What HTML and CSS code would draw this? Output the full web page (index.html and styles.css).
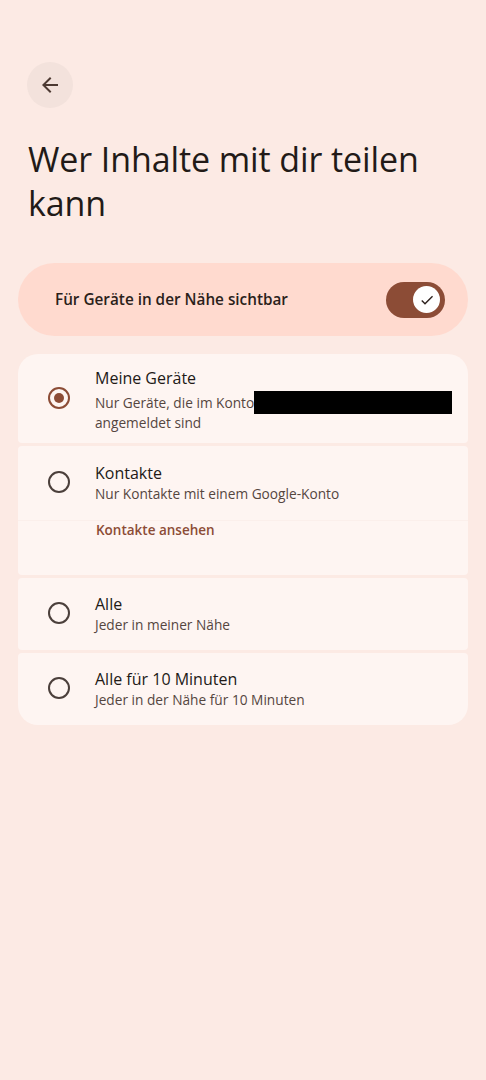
FILE: index.html
```html
<html>
<head>
<title>Sichtbarkeit</title>
<link rel="stylesheet" href="styles.css">
</head>
<body>
<div class="page">
  <div class="back">
    <svg width="24" height="24" viewBox="0 0 24 24"><path d="M20 11H7.83l5.59-5.59L12 4l-8 8 8 8 1.41-1.41L7.83 13H20v-2z" fill="#4d3a33"/></svg>
  </div>
  <h1 class="title">Wer Inhalte mit dir teilen kann</h1>

  <div class="vis">
    <span class="vis-label">Für Geräte in der Nähe sichtbar</span>
    <div class="switch">
      <div class="thumb">
        <svg width="16" height="16" viewBox="0 0 24 24"><path d="M9 16.17L4.83 12l-1.42 1.41L9 19 21 7l-1.41-1.41z" fill="#2b1f1b"/></svg>
      </div>
    </div>
  </div>

  <div class="list">
    <div class="item first">
      <div class="radio on"><span></span></div>
      <div class="text">
        <div class="name">Meine Geräte</div>
        <div class="sub">Nur Geräte, die im Konto<span class="redact"></span><br>angemeldet sind</div>
      </div>
    </div>
    <div class="item joined">
      <div class="radio"></div>
      <div class="text">
        <div class="name">Kontakte</div>
        <div class="sub">Nur Kontakte mit einem Google-Konto</div>
      </div>
    </div>
    <div class="item link">
      <a class="show">Kontakte ansehen</a>
    </div>
    <div class="item">
      <div class="radio"></div>
      <div class="text">
        <div class="name">Alle</div>
        <div class="sub">Jeder in meiner Nähe</div>
      </div>
    </div>
    <div class="item last">
      <div class="radio"></div>
      <div class="text">
        <div class="name">Alle für 10 Minuten</div>
        <div class="sub">Jeder in der Nähe für 10 Minuten</div>
      </div>
    </div>
  </div>
</div>
</body>
</html>
```

FILE: styles.css
```css
body { margin:0; background:#fceae4; font-family:"Open Sans", Roboto, sans-serif; color:#221a17; }
.page { padding:62px 18px 0 18px; }

.back { width:46px; height:46px; margin-left:9px; border-radius:50%; background:#f3e2dc; display:flex; align-items:center; justify-content:center; }

.title { font-size:34px; font-weight:400; line-height:44px; margin:29px 0 0 10px; letter-spacing:-0.1px; color:#221a17; }

.vis { margin-top:38px; height:73px; border-radius:37px; background:#ffdacf; display:flex; align-items:center; justify-content:space-between; padding:0 23px 0 37px; }
.vis-label { font-size:15.3px; font-weight:600; color:#2b1f1b; margin-top:-2px; }
.switch { width:59px; height:36px; border-radius:18px; background:#8c4c36; display:flex; align-items:center; justify-content:flex-end; padding-right:5px; box-sizing:border-box; }
.thumb { width:27px; height:27px; border-radius:50%; background:#fff; display:flex; align-items:center; justify-content:center; }

.list { margin-top:18px; display:flex; flex-direction:column; gap:3px; }
.item { background:#fef5f2; display:flex; align-items:center; padding-left:30px; border-radius:4px; height:72px; box-sizing:border-box; }
.item.first { border-radius:20px 20px 4px 4px; height:89px; }
.item.joined { height:74px; border-radius:4px 4px 0 0; }
.item.link { margin-top:-3px; border-top:1px solid #fbefeb; padding:0 0 0 78px; height:55px; align-items:flex-start; border-radius:0 0 4px 4px; }
.item.last { border-radius:4px 4px 20px 20px; }

.radio { width:18px; height:18px; border:2.5px solid #4b3f3b; border-radius:50%; margin-right:25px; display:flex; align-items:center; justify-content:center; flex:none; margin-bottom:2px; }
.radio.on { border-color:#8c4c36; }
.radio.on span { width:10px; height:10px; border-radius:50%; background:#8c4c36; }

.name { font-size:16px; line-height:20px; color:#221a17; }
.sub { font-size:13.7px; line-height:18px; color:#55463f; margin-top:2px; }
.first .name { margin-top:2px; }
.first .sub { margin-top:3px; }
.redact { display:inline-block; width:198px; height:23px; background:#000; vertical-align:-6px; }

.show { font-size:13.5px; font-weight:600; color:#8c4c36; }
```
